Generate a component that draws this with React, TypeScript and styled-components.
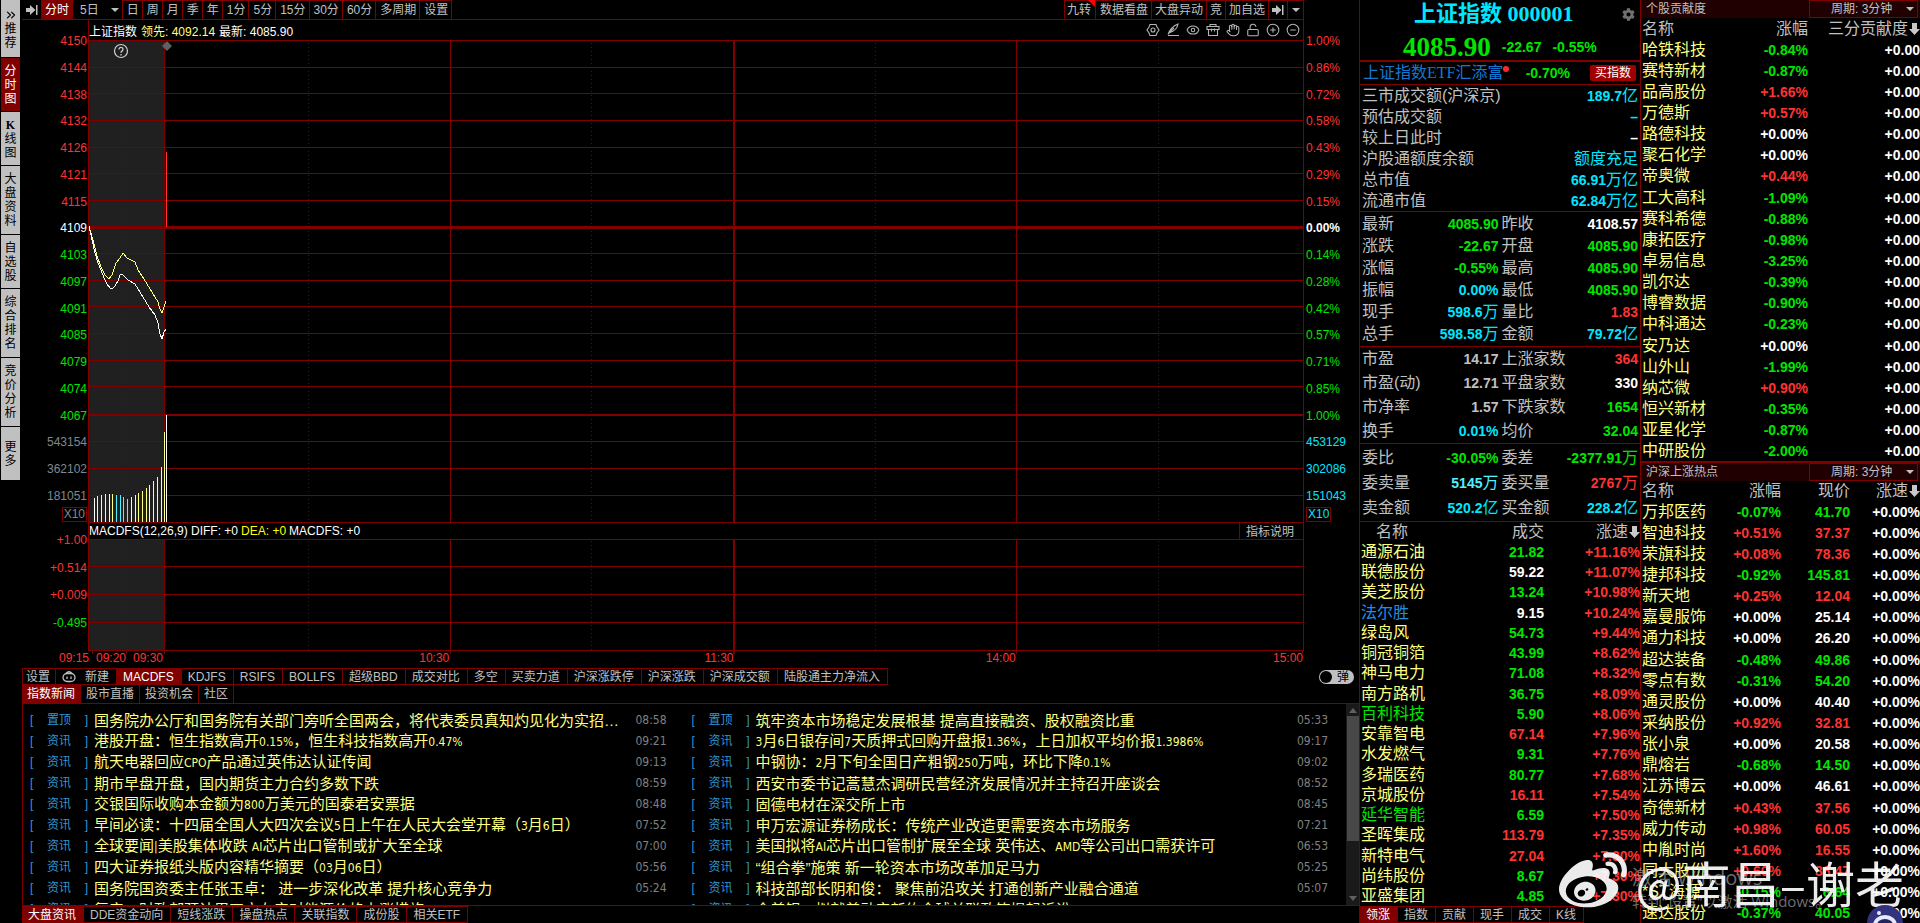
import React from "react";
import styled, { createGlobalStyle, css } from "styled-components";
import { ChevronsRight, CircleMinus, CirclePlus, Eye, Hand, LockOpen } from "lucide-react";
import { FaCog, FaWeibo } from "react-icons/fa";

const C = {
  line: "#800000",
  active: "#800000",
  grey: "#c0c0c0",
  red: "#ff3232",
  green: "#00e600",
  cyan: "#00e6ff",
  white: "#ffffff",
  yellow: "#ffff80",
  blue: "#1e90e6",
};

const SANS = `"Liberation Sans", "Noto Sans CJK SC", sans-serif`;

const Global = createGlobalStyle`
  *, *::before, *::after { box-sizing: border-box; }
  body { margin: 0; background: #000; font-family: ${SANS}; font-size: 12px; color: ${C.grey}; }
  button, input, select { font: inherit; color: inherit; margin: 0; padding: 0; border: 0; background: none; border-radius: 0; }
  button { cursor: pointer; }
  a { color: inherit; text-decoration: none; }
  dl, dd, dt, ul, h1, h2, p { margin: 0; padding: 0; font-weight: normal; }
  h2 { font-size: 12px; }
`;

const Page = styled.div`
  position: relative;
  display: flex;
  height: 100vh;
  overflow: hidden;
  background: #000;
`;

/* ---------- left navigation ---------- */

const Sidebar = styled.nav`
  flex: none;
  width: 22px;
  padding: 0 2px 0 1px;
  display: flex;
  flex-direction: column;
  gap: 1px;
`;

const SideButton = styled.button<{ $active?: boolean; $len: number }>`
  width: 19px;
  height: ${(p) => (p.$len === 4 ? 68 : p.$len === 0 ? 57 : 53)}px;
  display: flex;
  flex-direction: column;
  align-items: center;
  justify-content: center;
  line-height: 14px;
  background: ${(p) => (p.$active ? C.active : C.grey)};
  color: ${(p) => (p.$active ? "#fff" : "#000")};
`;

const SideGlyph = styled.span<{ $serif?: boolean }>`
  ${(p) => p.$serif && css`font-family: "Liberation Serif", serif; font-weight: bold;`}
`;

/* ---------- chart column ---------- */

const Main = styled.main`
  flex: 1;
  min-width: 0;
  display: flex;
  flex-direction: column;
`;

const Toolbar = styled.div`
  flex: none;
  height: 20px;
  display: flex;
  margin-right: 55px;
  border-bottom: 1px solid ${C.line};
`;

const Spacer = styled.div`
  flex: 1;
`;

const ToolGroup = styled.div`
  display: flex;
  border-top: 1px solid ${C.line};
`;

const ToolButton = styled.button<{ $active?: boolean; $wide?: boolean; $first?: boolean; $tight?: boolean }>`
  position: relative;
  display: flex;
  align-items: center;
  justify-content: center;
  gap: 12px;
  line-height: 18px;
  padding: ${(p) => (p.$wide ? "0 3px 0 7px" : p.$first ? "0 4px 0 2px" : p.$tight ? "0 3px" : "0 3px 0 4px")};
  white-space: nowrap;
  border-right: 1px solid ${C.line};
  ${(p) => p.$first && css`border-left: 1px solid ${C.line};`}
  ${(p) => p.$active && css`background: ${C.active}; color: #fff;`}
`;

const Corner = styled.i`
  position: absolute;
  top: -1px;
  right: 0;
  border-top: 7px solid #f00;
  border-left: 7px solid transparent;
`;

const ChartArea = styled.section`
  flex: none;
  display: flex;
`;

const Axis = styled.div<{ $right?: boolean }>`
  flex: none;
  width: ${(p) => (p.$right ? 55 : 66)}px;
  padding: 14px ${(p) => (p.$right ? "0 0 2px" : "1px 0 0")};
  display: flex;
  flex-direction: column;
  align-items: ${(p) => (p.$right ? "flex-start" : "flex-end")};
  line-height: 14px;
`;

const Scale = styled.div<{ $h: number }>`
  height: ${(p) => p.$h}px;
  display: flex;
  flex-direction: column;
  justify-content: space-between;
  align-items: inherit;
`;

const Tick = styled.span<{ $c: string; $bold?: boolean }>`
  color: ${(p) => p.$c};
  font-weight: ${(p) => (p.$bold ? "bold" : "normal")};
`;

const Unit = styled.span<{ $c: string }>`
  margin: 4px 0 11px;
  height: 15px;
  padding: 0 1px;
  border: 1px solid ${C.line};
  line-height: 13px;
  color: ${(p) => p.$c};
`;

const Plot = styled.div`
  flex: 1;
  min-width: 0;
  border-left: 1px solid ${C.line};
  border-right: 1px solid ${C.line};
`;

const PlotHead = styled.div<{ $h: number }>`
  height: ${(p) => p.$h}px;
  display: flex;
  align-items: center;
  gap: ${(p) => (p.$h === 20 ? 4 : 3)}px;
  white-space: nowrap;
`;

const Tone = styled.span<{ $c: string }>`
  color: ${(p) => p.$c};
`;

const IconBar = styled.div`
  display: flex;
  gap: 6px;
  margin: 0 3px 0 auto;
`;

const IconButton = styled.button`
  display: flex;
  color: #b4b4b4;
`;

const HelpButton = styled.button`
  display: flex;
  height: 16px;
  align-items: center;
  margin-left: auto;
  padding: 0 9px 0 6px;
  border-left: 1px solid ${C.line};
  color: #c0c0c0;
`;

const Canvas = styled.svg`
  display: block;
  width: 100%;
  overflow: visible;
`;

const TimeAxis = styled.div`
  flex: none;
  height: 17px;
  margin-right: 56px;
  display: grid;
  grid-template-columns: 67px 37fr 37fr 286fr 284fr 282fr 287fr;
  text-align: right;
  line-height: 15px;
  color: ${C.red};
`;

/* ---------- tab strips ---------- */

const Tabs = styled.div<{ $h: number }>`
  flex: none;
  height: ${(p) => p.$h}px;
  display: flex;
`;

const TabSet = styled.div<{ $noTop?: boolean }>`
  display: flex;
  border: 1px solid ${C.line};
  border-width: ${(p) => (p.$noTop ? "0" : "1px 0")};
`;

const Tab = styled.button<{ $active?: boolean; $tight?: boolean; $left?: boolean }>`
  display: flex;
  align-items: center;
  gap: 9px;
  padding: ${(p) => (p.$tight ? "0 5px" : "0 7px 0 6px")};
  white-space: nowrap;
  line-height: 14px;
  border-right: 1px solid ${C.line};
  ${(p) => p.$left && css`border-left: 1px solid ${C.line}; padding: 0 5px 0 3px;`}
  ${(p) => p.$active && css`background: ${C.active}; color: #fff;`}
`;

const Toggle = styled.label`
  display: flex;
  align-items: center;
  justify-content: space-between;
  width: 35px;
  height: 14px;
  margin: 2px 5px 0 auto;
  padding: 0 5px 0 1px;
  border-radius: 7px;
  background: ${C.grey};
  color: #000;
  line-height: 14px;
  input {
    appearance: none;
    width: 12px;
    height: 12px;
    border-radius: 6px;
    background: #000;
  }
`;

/* ---------- news ---------- */

const News = styled.section`
  flex: 1;
  min-height: 0;
  display: flex;
  border: 1px solid ${C.line};
  border-right: 0;
`;

const NewsGrid = styled.ul`
  flex: 1;
  min-width: 0;
  overflow: hidden;
  display: grid;
  grid-template-columns: minmax(0, 1fr) minmax(0, 1fr);
  grid-auto-rows: 21px;
  padding-top: 6px;
  list-style: none;
`;

const NewsItem = styled.li`
  display: flex;
  align-items: center;
  padding: 0 18px 0 7px;
  line-height: 21px;
  white-space: nowrap;
`;

const Tag = styled.span`
  flex: none;
  width: 64px;
  display: flex;
  color: #3296d2;
  padding-right: 6px;
  justify-content: space-between;
`;

const NewsTitle = styled.a`
  flex: 1;
  min-width: 0;
  overflow: hidden;
  text-overflow: ellipsis;
  font-size: 15px;
  color: ${C.yellow};
  margin-right: 13px;
`;

const Latin = styled.span`
  font-family: "DejaVu Sans Condensed", "DejaVu Sans", sans-serif;
  font-size: 12px;
`;

const Time = styled.time`
  font-family: "DejaVu Sans Condensed", "DejaVu Sans", sans-serif;
  color: #808080;
`;

const ScrollBar = styled.div`
  flex: none;
  width: 13px;
  display: flex;
  flex-direction: column;
  align-items: center;
  background: #1a1a1a;
`;

const Thumb = styled.div`
  width: 12px;
  height: 125px;
  background: #484848;
`;

const Arrow = styled.i<{ $down?: boolean }>`
  width: 0;
  border: 4px solid transparent;
  ${(p) =>
    p.$down
      ? css`border-top: 5px solid #606060; border-bottom: 0; margin: auto 0 4px;`
      : css`border-bottom: 5px solid #606060; border-top: 0; margin: 4px 0 3px;`}
`;

const Caret = styled.i`
  width: 0;
  border: 4px solid transparent;
  border-top: 4px solid ${C.grey};
  border-bottom: 0;
`;

/* ---------- quote panel ---------- */

const QuotePanel = styled.aside`
  flex: none;
  width: 282px;
  display: flex;
  flex-direction: column;
  border: 1px solid ${C.line};
  border-width: 0 1px;
`;

const QuoteHead = styled.header`
  flex: none;
  height: 62px;
  border-bottom: 2px solid ${C.line};
`;

const NameRow = styled.div`
  height: 28px;
  display: flex;
  align-items: center;
  padding: 0 5px 0 54px;
`;

const IndexName = styled.h1`
  flex: 1;
  font-family: "Liberation Serif", "Noto Sans CJK SC", serif;
  font-size: 22px;
  line-height: 28px;
  font-weight: bold;
  color: ${C.cyan};
`;

const PriceRow = styled.div`
  display: flex;
  align-items: center;
  gap: 11px;
  height: 38px;
  padding-left: 43px;
  color: ${C.green};
  font-weight: bold;
  font-size: 14px;
`;

const BigPrice = styled.span`
  font-family: "Liberation Serif", serif;
  font-size: 27px;
`;

const EtfRow = styled.div`
  flex: none;
  height: 23px;
  display: flex;
  align-items: center;
  padding: 0 4px 0 3px;
  border-bottom: 1px solid ${C.line};
`;

const EtfName = styled.a`
  font-family: "Liberation Serif", "Noto Sans CJK SC", serif;
  font-size: 16px;
  line-height: 20px;
  color: #1478d2;
`;

const Dot = styled.i`
  width: 6px;
  height: 6px;
  border-radius: 3px;
  background: #ff2828;
  margin: 0 auto 8px 0;
`;

const Buy = styled.button`
  height: 16px;
  width: 46px;
  margin-left: 20px;
  border-radius: 2px;
  background: #a00000;
  color: #fff;
  line-height: 16px;
`;

const Num = styled.span<{ $c: string }>`
  color: ${(p) => p.$c};
  font-size: 14px;
  font-weight: bold;
`;

const Stats = styled.dl<{ $row: number; $single?: boolean; $pad?: number }>`
  flex: none;
  display: grid;
  padding: ${(p) => p.$pad || 0}px 2px;
  border-bottom: 1px solid ${C.line};
  grid-template-columns: ${(p) => (p.$single ? "1fr" : "1fr 1fr")};
  grid-auto-rows: ${(p) => p.$row}px;
  column-gap: 3px;
  font-size: 16px;
  line-height: 20px;
`;

const Stat = styled.div`
  display: flex;
  justify-content: space-between;
  align-items: center;
  white-space: nowrap;
`;

const Value = styled.dd<{ $c: string }>`
  display: flex;
  align-items: center;
  color: ${(p) => p.$c};
  font-weight: bold;
  font-size: 14px;
`;

const Han = styled.span`
  font-weight: normal;
  font-size: 16px;
`;

/* ---------- ranking tables ---------- */

const Rank = styled.table<{ $every: number; $row: number; $head?: number }>`
  width: 100%;
  table-layout: fixed;
  border-collapse: collapse;
  th, td {
    padding: 0;
    height: ${(p) => p.$row}px;
    line-height: 20px;
    text-align: right;
    white-space: nowrap;
  }
  th { font-size: 16px; font-weight: normal; height: ${(p) => p.$head || 20}px; }
  td { font-size: 14px; font-weight: bold; }
  th:first-child, td:first-child { text-align: left; font-size: 16px; font-weight: normal; padding-left: 1px; }
  tbody tr:nth-child(${(p) => p.$every}n) td { height: ${(p) => p.$row + 1}px; }
`;

const Th = styled.th<{ $w?: number; $indent?: boolean }>`
  width: ${(p) => (p.$w ? p.$w + "px" : "auto")};
  &&&& { ${(p) => p.$indent && css`padding-left: 16px;`} }
`;

const Cell = styled.td<{ $c: string }>`
  color: ${(p) => p.$c};
`;

const Sortable = styled.button`
  display: inline-flex;
  align-items: center;
  vertical-align: top;
  line-height: 20px;
  gap: 1px;
`;

const RankPanel = styled.aside`
  flex: none;
  width: 279px;
  overflow: hidden;
`;

const RankHead = styled.header<{ $second?: boolean }>`
  height: 18px;
  display: flex;
  align-items: center;
  justify-content: space-between;
  padding: 0 2px 0 5px;
  background: #200000;
  line-height: 16px;
  ${(p) => p.$second && css`border-top: 2px solid ${C.line}; height: 20px;`}
`;

const Period = styled.label`
  display: flex;
  align-items: center;
  width: 109px;
  height: 18px;
  border: 1px solid ${C.line};
  padding-left: 21px;
  select { appearance: none; flex: 1; line-height: 16px; outline: 0; }
  i { margin-right: 3px; }
`;

const Foot = styled.div`
  margin-top: auto;
`;

/* ---------- overlays ---------- */

const Watermark = styled.div`
  position: absolute;
  right: 16px;
  top: 848px;
  display: flex;
  align-items: center;
  gap: 8px;
  color: #fff;
  opacity: 0.92;
  font-size: 49px;
  line-height: 56px;
  white-space: nowrap;
  pointer-events: none;
  font-family: "Noto Sans CJK SC", sans-serif;
`;

const Activate = styled.div`
  position: absolute;
  left: calc(100% - 288px);
  top: 866px;
  color: #b4b4b4;
  opacity: 0.6;
  white-space: nowrap;
  pointer-events: none;
  font-size: 15px;
  line-height: 22px;
  font-family: "Open Sans", "Noto Sans CJK SC", sans-serif;
`;

const ActivateTitle = styled.p`
  font-size: 20px;
  line-height: 24px;
`;

const Mascot = styled.button`
  position: absolute;
  right: 16px;
  bottom: -19px;
  display: flex;
`;

/* ---------- data ---------- */

const SIDE: [string, boolean?][] = [
  ["分时图", true], ["K线图"], ["大盘资料"], ["自选股"], ["综合排名"], ["竞价分析"], ["更多"],
];

const PERIODS = ["日", "周", "月", "季", "年", "1分", "5分", "15分", "30分", "60分", "多周期", "设置"];

const PRICES = ["4150", "4144", "4138", "4132", "4126", "4121", "4115", "4109", "4103", "4097", "4091", "4085", "4079", "4074", "4067", "543154", "362102", "181051"];
const PERCENTS = ["1.00%", "0.86%", "0.72%", "0.58%", "0.43%", "0.29%", "0.15%", "0.00%", "0.14%", "0.28%", "0.42%", "0.57%", "0.71%", "0.85%", "1.00%", "453129", "302086", "151043"];

const INDICATORS = ["MACDFS", "KDJFS", "RSIFS", "BOLLFS", "超级BBD", "成交对比", "多空", "买卖力道", "沪深涨跌停", "沪深涨跌", "沪深成交额", "陆股通主力净流入"];
const NEWS_TABS = ["指数新闻", "股市直播", "投资机会", "社区"];
const FOOT_TABS = ["大盘资讯", "DDE资金动向", "短线涨跌", "操盘热点", "关联指数", "成份股", "相关ETF"];
const RANK_TABS = ["领涨", "指数", "贡献", "现手", "成交", "K线"];

const NEWS: [string, string][] = [
  ["国务院办公厅和国务院有关部门旁听全国两会，将代表委员真知灼见化为实招硬招", "08:58"],
  ["筑牢资本市场稳定发展根基 提高直接融资、股权融资比重", "05:33"],
  ["港股开盘：恒生指数高开0.15%，恒生科技指数高开0.47%", "09:21"],
  ["3月6日银存间7天质押式回购开盘报1.36%，上日加权平均价报1.3986%", "09:17"],
  ["航天电器回应CPO产品通过英伟达认证传闻", "09:13"],
  ["中钢协：2月下旬全国日产粗钢250万吨，环比下降0.1%", "09:02"],
  ["期市早盘开盘，国内期货主力合约多数下跌", "08:59"],
  ["西安市委书记蒿慧杰调研民营经济发展情况并主持召开座谈会", "08:52"],
  ["交银国际收购本金额为800万美元的国泰君安票据", "08:48"],
  ["固德电材在深交所上市", "08:45"],
  ["早间必读：十四届全国人大四次会议5日上午在人民大会堂开幕（3月6日）", "07:52"],
  ["申万宏源证券杨成长：传统产业改造更需要资本市场服务", "07:21"],
  ["全球要闻|美股集体收跌 AI芯片出口管制或扩大至全球", "07:00"],
  ["美国拟将AI芯片出口管制扩展至全球 英伟达、AMD等公司出口需获许可", "06:53"],
  ["四大证券报纸头版内容精华摘要（03月06日）", "05:56"],
  ["“组合拳”施策 新一轮资本市场改革加足马力", "05:25"],
  ["国务院国资委主任张玉卓： 进一步深化改革 提升核心竞争力", "05:24"],
  ["科技部部长阴和俊： 聚焦前沿攻关 打通创新产业融合通道", "05:07"],
  ["复产、财政部预计用四方在产对能源价格上涨措施", ""],
  ["全美银、拟就美动产新约全球关联政策提起诉讼", ""],
];

type Row = string[];

const tone = (v: string) => (v.startsWith("-") ? C.green : /^\+0\.00/.test(v) ? C.white : C.red);

const TOTALS: [string, string, string][] = [
  ["三市成交额(沪深京)", "189.7亿", C.cyan],
  ["预估成交额", "–", C.cyan],
  ["较上日此时", "–", C.white],
  ["沪股通额度余额", "额度充足", C.cyan],
  ["总市值", "66.91万亿", C.cyan],
  ["流通市值", "62.84万亿", C.cyan],
];

const QUOTES: [string, string, string][] = [
  ["最新", "4085.90", C.green], ["昨收", "4108.57", C.white],
  ["涨跌", "-22.67", C.green], ["开盘", "4085.90", C.green],
  ["涨幅", "-0.55%", C.green], ["最高", "4085.90", C.green],
  ["振幅", "0.00%", C.cyan], ["最低", "4085.90", C.green],
  ["现手", "598.6万", C.cyan], ["量比", "1.83", C.red],
  ["总手", "598.58万", C.cyan], ["金额", "79.72亿", C.cyan],
];

const RATIOS: [string, string, string][] = [
  ["市盈", "14.17", C.grey], ["上涨家数", "364", C.red],
  ["市盈(动)", "12.71", C.grey], ["平盘家数", "330", C.white],
  ["市净率", "1.57", C.grey], ["下跌家数", "1654", C.green],
  ["换手", "0.01%", C.cyan], ["均价", "32.04", C.green],
];

const ORDERS: [string, string, string][] = [
  ["委比", "-30.05%", C.green], ["委差", "-2377.91万", C.green],
  ["委卖量", "5145万", "#50f0ff"], ["委买量", "2767万", C.red],
  ["卖金额", "520.2亿", C.cyan], ["买金额", "228.2亿", C.cyan],
];

const LEADERS: [string, string, string, string][] = [
  ["通源石油", "21.82", "+11.16%", C.green], ["联德股份", "59.22", "+11.07%", C.white],
  ["美芝股份", "13.24", "+10.98%", C.green], ["法尔胜", "9.15", "+10.24%", C.white],
  ["绿岛风", "54.73", "+9.44%", C.green], ["铜冠铜箔", "43.99", "+8.62%", C.green],
  ["神马电力", "71.08", "+8.32%", C.green], ["南方路机", "36.75", "+8.09%", C.green],
  ["百利科技", "5.90", "+8.06%", C.green], ["安靠智电", "67.14", "+7.96%", C.red],
  ["水发燃气", "9.31", "+7.76%", C.green], ["多瑞医药", "80.77", "+7.68%", C.green],
  ["京城股份", "16.11", "+7.54%", C.red], ["延华智能", "6.59", "+7.50%", C.green],
  ["圣晖集成", "113.79", "+7.35%", C.red], ["新特电气", "27.04", "+7.30%", C.red],
  ["尚纬股份", "8.67", "+7.30%", C.green], ["亚盛集团", "4.85", "+7.30%", C.green],
];
const LEADER_TONE: Record<string, string> = { 法尔胜: C.blue, 百利科技: C.green, 延华智能: C.green };

const CONTRIB: Row[] = [
  ["哈铁科技", "-0.84%"], ["赛特新材", "-0.87%"], ["品高股份", "+1.66%"], ["万德斯", "+0.57%"],
  ["路德科技", "+0.00%"], ["聚石化学", "+0.00%"], ["帝奥微", "+0.44%"], ["工大高科", "-1.09%"],
  ["赛科希德", "-0.88%"], ["康拓医疗", "-0.98%"], ["卓易信息", "-3.25%"], ["凯尔达", "-0.39%"],
  ["博睿数据", "-0.90%"], ["中科通达", "-0.23%"], ["安乃达", "+0.00%"], ["山外山", "-1.99%"],
  ["纳芯微", "+0.90%"], ["恒兴新材", "-0.35%"], ["亚星化学", "-0.87%"], ["中研股份", "-2.00%"],
];

const HOT: Row[] = [
  ["万邦医药", "-0.07%", "41.70"], ["智迪科技", "+0.51%", "37.37"], ["荣旗科技", "+0.08%", "78.36"],
  ["捷邦科技", "-0.92%", "145.81"], ["新天地", "+0.25%", "12.04"], ["嘉曼服饰", "+0.00%", "25.14"],
  ["通力科技", "+0.00%", "26.20"], ["超达装备", "-0.48%", "49.86"], ["零点有数", "-0.31%", "54.20"],
  ["通灵股份", "+0.00%", "40.40"], ["采纳股份", "+0.92%", "32.81"], ["张小泉", "+0.00%", "20.58"],
  ["鼎熔岩", "-0.68%", "14.50"], ["江苏博云", "+0.00%", "46.61"], ["奇德新材", "+0.43%", "37.56"],
  ["威力传动", "+0.98%", "60.05"], ["中胤时尚", "+1.60%", "16.55"], ["同大股份", "+0.60%", "36.47"],
  ["*ST海源", "-0.15%", "6.64"], ["速达股份", "-0.37%", "40.05"],
];

/* ---------- chart drawing (plot origin is its top left corner) ---------- */

const GRID_Y = [27, 53, 80, 107, 133, 160, 213, 240, 266, 293, 320, 346, 401, 428, 455];
const SOLID_X = [75, 361, 927];
const DOTTED_X = [37, 219, 502, 786, 1069];

const VOLUME: [number, number, string][] = [
  [5, 458, "#fff"], [8, 456, C.yellow], [12, 455, C.yellow], [16, 454, C.yellow], [20, 454, C.yellow],
  [23, 454, C.yellow], [27, 455, "#50f0ff"], [31, 455, "#50f0ff"], [34, 457, "#50f0ff"], [38, 459, "#50f0ff"],
  [42, 457, C.yellow], [46, 455, C.yellow], [49, 453, C.yellow], [53, 451, C.yellow], [57, 448, C.yellow],
  [60, 445, C.yellow], [64, 441, C.yellow], [68, 437, C.yellow], [72, 427, C.yellow], [75, 392, C.yellow],
  [77, 375, "#fff"],
];

const WHITE_LINE = "0,186 3,200 6,213 9,223 12,230 15,238 18,244 21,248 23,249 26,246 29,241 31,235 33,234 36,237 39,240 46,244 54,257 60,267 66,275 69,283 71,294 73,299 75,292 77,289";
const YELLOW_LINE = "0,186 4,200 8,216 12,227 16,235 20,239 23,235 27,223 31,218 34,213 38,218 42,220 46,222 49,230 55,239 61,249 66,257 69,262 71,269 73,273 75,267 77,261";

function PriceChart() {
  return (
    <Canvas viewBox="0 0 1214 482" height="482" preserveAspectRatio="none" shapeRendering="crispEdges">
      <rect x="0" y="0" width="75" height="482" fill="#202020" />
      <g stroke={C.line}>
        <path d="M0 .5H1214M0 482.5H1214" />
        {GRID_Y.map((y) => <path key={y} d={`M0 ${y + 0.5}H1214`} />)}
        {SOLID_X.map((x) => <path key={x} d={`M${x + 0.5} 0V482`} />)}
        {DOTTED_X.map((x) => <path key={x} d={`M${x + 0.5} 3V482`} strokeDasharray="1 3" />)}
      </g>
      <g fill={C.line}>
        <rect x="0" y="186" width="1214" height="3" />
        <rect x="0" y="374" width="1214" height="2" />
        <rect x="644" y="0" width="2" height="482" />
      </g>
      {VOLUME.map(([x, y, c]) => <rect key={x} x={x} y={y} width="1" height={482 - y} fill={c} />)}
      <rect x="77" y="112" width="1" height="75" fill={C.red} />
      <polyline points={YELLOW_LINE} fill="none" stroke={C.yellow} />
      <polyline points={WHITE_LINE} fill="none" stroke="#fff" />
      <g shapeRendering="geometricPrecision">
        <path d="M78 1l5 5-5 5-5-5z" fill="#606060" />
        <circle cx="32" cy="11" r="6.5" fill="none" stroke="#d0d0d0" strokeWidth="1.2" />
        <path d="M30 9.5a2 2 0 1 1 3.2 1.4q-1.2.8-1.2 1.9M32 14v1.4" fill="none" stroke="#d0d0d0" strokeWidth="1.3" />
      </g>
    </Canvas>
  );
}

function MacdChart() {
  return (
    <Canvas viewBox="0 0 1214 112" height="112" preserveAspectRatio="none" shapeRendering="crispEdges">
      <rect x="0" y="0" width="75" height="111" fill="#202020" />
      <g stroke={C.line}>
        {[0, 27, 55, 83, 111].map((y) => <path key={y} d={`M0 ${y + 0.5}H1214`} />)}
        {SOLID_X.map((x) => <path key={x} d={`M${x + 0.5} 0V115`} />)}
        {DOTTED_X.map((x) => <path key={x} d={`M${x + 0.5} 2V111`} strokeDasharray="1 3" />)}
        <path d="M1213.5 111V115M3.5 111V115M37.5 111V115" />
      </g>
      <rect x="644" y="0" width="2" height="115" fill={C.line} />
    </Canvas>
  );
}

function HexIcon() {
  return (
    <svg width="14" height="14" viewBox="0 0 14 14" fill="none" stroke="currentColor" strokeWidth="1.1">
      <path d="M4 1.5h6L11 4l2 3-2 3-1 2.5H4L3 10 1 7l2-3z" />
      <circle cx="7" cy="7" r="2" />
    </svg>
  );
}
function QuillIcon() {
  return (
    <svg width="14" height="14" viewBox="0 0 14 14" fill="none" stroke="currentColor" strokeWidth="1.1">
      <path d="M2 12.5h11M2 11.500C3.500 7 7 3 12 1 11.500 4.500 8.500 8 4 9.500M2.500 10.500 8 5" />
    </svg>
  );
}
function CaseIcon() {
  return (
    <svg width="14" height="14" viewBox="0 0 14 14" fill="none" stroke="currentColor" strokeWidth="1.1">
      <path d="M4 3.500V1.500h6v2M1 3.500h12v3H1zM2.500 6.500v6h9v-6M5.500 5.500v3M8.500 5.500v3" />
    </svg>
  );
}
function NextIcon() {
  return (
    <svg width="12" height="12" viewBox="0 0 12 12" fill="currentColor">
      <path d="M0 4h4V1l5.500 5L4 11V8H0zM10 1h1.500v10H10z" />
    </svg>
  );
}
function RobotIcon() {
  return (
    <svg width="14" height="13" viewBox="0 0 14 13" fill="none" stroke="currentColor" strokeWidth="1.3">
      <rect x="1" y="3.500" width="12" height="8" rx="4" />
      <path d="M4 3.500Q7 0 10 3.500M5 6.500v2.500M9 6.500v2.500" />
    </svg>
  );
}
function DownIcon() {
  return (
    <svg width="11" height="14" viewBox="0 0 11 14" fill="#c8c8c8" aria-hidden="true">
      <path d="M3 1h5v6h3l-5.500 6L0 7h3z" />
    </svg>
  );
}

/* Splits a headline so that Latin runs take the narrow UI face. */
function Mixed({ text }: { text: string }) {
  return (
    <>
      {text.split(/([A-Za-z0-9.%|]+)/).map((part, i) => (i % 2 ? <Latin key={i}>{part}</Latin> : part))}
    </>
  );
}

function StatList({ rows, ...rest }: { rows: [string, string, string][]; $row: number; $single?: boolean; $pad?: number }) {
  return (
    <Stats {...rest}>
      {rows.map(([label, value, color]) => {
        const [, num, han] = value.match(/^([^\u4e00-\u9fff]*)(.*)$/)!;
        return (
          <Stat key={label}>
            <dt>{label}</dt>
            <Value $c={color}>{num}{han && <Han>{han}</Han>}</Value>
          </Stat>
        );
      })}
    </Stats>
  );
}

function PeriodSelect({ id }: { id: string }) {
  return (
    <Period htmlFor={id}>
      周期:&nbsp;
      <select id={id} defaultValue="3"><option value="3">3分钟</option></select>
      <Caret />
    </Period>
  );
}

export default function App() {
  const axisTone = (i: number, vol: string) => (i < 7 ? C.red : i === 7 ? C.white : i < 15 ? C.green : vol);
  return (
    <Page>
      <Global />
      <Sidebar>
        <SideButton $len={0}>
          <ChevronsRight size={14} strokeWidth={2} />
          <SideGlyph>推</SideGlyph><SideGlyph>荐</SideGlyph>
        </SideButton>
        {SIDE.map(([name, active]) => (
          <SideButton key={name} $active={active} $len={name.length}>
            {name.split("").map((ch) => <SideGlyph key={ch} $serif={ch === "K"}>{ch}</SideGlyph>)}
          </SideButton>
        ))}
      </Sidebar>

      <Main>
        <Toolbar>
          <ToolButton aria-label="展开"><NextIcon /></ToolButton>
          <ToolButton $active $tight>分时</ToolButton>
          <ToolButton $wide>5日<Caret /></ToolButton>
          <ToolGroup>{PERIODS.map((p) => <ToolButton key={p}>{p}</ToolButton>)}</ToolGroup>
          <Spacer />
          <ToolGroup>
            <ToolButton $first>九转<Corner /></ToolButton>
            <ToolButton>数据看盘</ToolButton>
            <ToolButton $tight>大盘异动</ToolButton>
            <ToolButton $tight>竞</ToolButton>
            <ToolButton $tight>加自选</ToolButton>
            <ToolButton $tight aria-label="下一个"><NextIcon /></ToolButton>
            <ToolButton aria-label="更多"><Caret /></ToolButton>
          </ToolGroup>
        </Toolbar>

        <ChartArea>
          <Axis>
            <Scale $h={469}>
              {PRICES.map((t, i) => <Tick key={t} $c={axisTone(i, "#80888c")}>{t}</Tick>)}
            </Scale>
            <Unit $c="#80888c">X10</Unit>
            <Scale $h={97}>
              <Tick $c={C.red}>+1.00</Tick>
              <Tick $c={C.red}>+0.514</Tick>
              <Tick $c={C.red}>+0.009</Tick>
              <Tick $c={C.green}>-0.495</Tick>
            </Scale>
          </Axis>
          <Plot>
            <PlotHead $h={20}>
              <Tone $c="#fff">上证指数</Tone>
              <Tone $c={C.yellow}>领先: 4092.14</Tone>
              <Tone $c="#fff">最新: 4085.90</Tone>
              <IconBar>
                <IconButton aria-label="设置"><HexIcon /></IconButton>
                <IconButton aria-label="画线"><QuillIcon /></IconButton>
                <IconButton aria-label="显示"><Eye size={14} strokeWidth={1.8} /></IconButton>
                <IconButton aria-label="工具箱"><CaseIcon /></IconButton>
                <IconButton aria-label="拖动"><Hand size={14} strokeWidth={1.8} /></IconButton>
                <IconButton aria-label="锁定"><LockOpen size={14} strokeWidth={1.8} /></IconButton>
                <IconButton aria-label="放大"><CirclePlus size={14} strokeWidth={1.8} /></IconButton>
                <IconButton aria-label="缩小"><CircleMinus size={14} strokeWidth={1.8} /></IconButton>
              </IconBar>
            </PlotHead>
            <PriceChart />
            <PlotHead $h={17}>
              <Tone $c="#fff">MACDFS(12,26,9) DIFF: +0</Tone>
              <Tone $c="#ff0">DEA: +0</Tone>
              <Tone $c="#fff">MACDFS: +0</Tone>
              <HelpButton>指标说明</HelpButton>
            </PlotHead>
            <MacdChart />
          </Plot>
          <Axis $right>
            <Scale $h={469}>
              {PERCENTS.map((t, i) => <Tick key={i} $c={axisTone(i, C.cyan)} $bold={i === 7}>{t}</Tick>)}
            </Scale>
            <Unit $c={C.cyan}>X10</Unit>
          </Axis>
        </ChartArea>
        <TimeAxis>
          {["09:15", "09:20", "09:30", "10:30", "11:30", "14:00", "15:00"].map((t) => <span key={t}>{t}</span>)}
        </TimeAxis>

        <Tabs $h={17}>
          <TabSet>
            <Tab $left>设置</Tab>
            <Tab><RobotIcon />新建</Tab>
            {INDICATORS.map((t, i) => <Tab key={t} $active={i === 0}>{t}</Tab>)}
          </TabSet>
          <Toggle><input type="checkbox" aria-label="弹" />弹</Toggle>
        </Tabs>
        <Tabs $h={18}>
          <TabSet $noTop>
            {NEWS_TABS.map((t, i) => <Tab key={t} $tight $active={i === 0}>{t}</Tab>)}
          </TabSet>
        </Tabs>

        <News>
          <NewsGrid>
            {NEWS.map(([title, time], i) => (
              <NewsItem key={title}>
                <Tag><span>[</span><span>{i < 2 ? "置顶" : "资讯"}</span><span>]</span></Tag>
                <NewsTitle href="#"><Mixed text={title} /></NewsTitle>
                <Time>{time}</Time>
              </NewsItem>
            ))}
          </NewsGrid>
          <ScrollBar><Arrow /><Thumb /><Arrow $down /></ScrollBar>
        </News>
        <Tabs $h={17}>
          <TabSet>
            {FOOT_TABS.map((t, i) => <Tab key={t} $active={i === 0}>{t}</Tab>)}
          </TabSet>
        </Tabs>
      </Main>

      <QuotePanel>
        <QuoteHead>
          <NameRow>
            <IndexName>上证指数 000001</IndexName>
            <IconButton aria-label="面板设置"><FaCog size={13} color="#707070" /></IconButton>
          </NameRow>
          <PriceRow><BigPrice>4085.90</BigPrice><span>-22.67</span><span>-0.55%</span></PriceRow>
        </QuoteHead>
        <EtfRow>
          <EtfName href="#">上证指数ETF汇添富</EtfName>
          <Dot />
          <Num $c={C.green}>-0.70%</Num>
          <Buy>买指数</Buy>
        </EtfRow>
        <StatList rows={TOTALS} $row={21} $single />
        <StatList rows={QUOTES} $row={22} $pad={1} />
        <StatList rows={RATIOS} $row={24} />
        <StatList rows={ORDERS} $row={25} $pad={1} />
        <Rank $every={4} $row={20}>
          <thead>
            <tr>
              <Th $w={94} $indent>名称</Th>
              <Th $w={90}>成交</Th>
              <Th><Sortable>涨速<DownIcon /></Sortable></Th>
            </tr>
          </thead>
          <tbody>
            {LEADERS.map(([n, p, s, c]) => (
              <tr key={n}>
                <Cell $c={LEADER_TONE[n] || C.yellow}>{n}</Cell>
                <Cell $c={c}>{p}</Cell>
                <Cell $c={C.red}>{s}</Cell>
              </tr>
            ))}
          </tbody>
        </Rank>
        <Foot>
          <Tabs $h={17}>
            <TabSet>{RANK_TABS.map((t, i) => <Tab key={t} $active={i === 0}>{t}</Tab>)}</TabSet>
          </Tabs>
        </Foot>
      </QuotePanel>

      <RankPanel>
        <RankHead><h2>个股贡献度</h2><PeriodSelect id="period-a" /></RankHead>
        <Rank $every={7} $row={21} $head={21}>
          <thead>
            <tr>
              <Th $w={85}>名称</Th>
              <Th $w={82}>涨幅</Th>
              <Th><Sortable>三分贡献度<DownIcon /></Sortable></Th>
            </tr>
          </thead>
          <tbody>
            {CONTRIB.map(([n, v]) => (
              <tr key={n}>
                <Cell $c={C.yellow}>{n}</Cell>
                <Cell $c={tone(v)}>{v}</Cell>
                <Cell $c={C.white}>+0.00</Cell>
              </tr>
            ))}
          </tbody>
        </Rank>
        <RankHead $second><h2>沪深上涨热点</h2><PeriodSelect id="period-b" /></RankHead>
        <Rank $every={7} $row={21}>
          <thead>
            <tr>
              <Th $w={80}>名称</Th>
              <Th $w={60}>涨幅</Th>
              <Th $w={69}>现价</Th>
              <Th><Sortable>涨速<DownIcon /></Sortable></Th>
            </tr>
          </thead>
          <tbody>
            {HOT.map(([n, v, p]) => (
              <tr key={n}>
                <Cell $c={C.yellow}>{n}</Cell>
                <Cell $c={tone(v)}>{v}</Cell>
                <Cell $c={tone(v)}>{p}</Cell>
                <Cell $c={C.white}>+0.00%</Cell>
              </tr>
            ))}
          </tbody>
        </Rank>
      </RankPanel>

      <Activate>
        <ActivateTitle>激活 Windows</ActivateTitle>
        <p>转到“设置”以激活 Windows。</p>
      </Activate>
      <Watermark><FaWeibo size={68} /><span>@南昌–谢老</span></Watermark>
      <Mascot aria-label="助手">
        <svg width="38" height="38" viewBox="0 0 38 38">
          <circle cx="19" cy="19" r="18" fill="#32327d" />
          <path d="M7 21a12 10 0 0 1 24 0v8H7z" fill="#e6eaff" />
          <path d="M11 21a8 6 0 0 1 16 0v6H11z" fill="#23235f" />
          <circle cx="13" cy="9" r="2" fill="#e6eaff" />
        </svg>
      </Mascot>
    </Page>
  );
}
